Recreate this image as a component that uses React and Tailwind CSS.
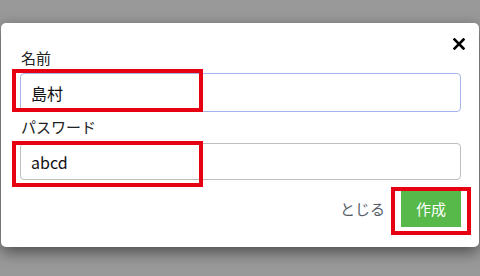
import React from 'react';

const App = () => {
    return (
        <div className="relative h-[276px] w-[480px] overflow-hidden bg-[#999999] pt-[23px] pl-[1px] pr-[1px] font-['Noto_Sans_CJK_JP',sans-serif]">
            {/* Modal */}
            <div className="relative h-[224px] rounded-[5px] bg-white shadow-[0_5px_15px_rgba(0,0,0,0.5)]">
                <button className="absolute right-[14px] top-[15px] flex h-[12px] w-[12px] items-center justify-center">
                    <svg viewBox="0 0 12 12" className="h-[12px] w-[12px]">
                        <path d="M1.5 1.5 L10.5 10.5 M10.5 1.5 L1.5 10.5" stroke="#000" strokeWidth="2.6" strokeLinecap="square" />
                    </svg>
                </button>

                <div className="flex flex-col pl-[19px] pr-[18px] pt-[25px]">
                    <label className="mb-[5px] pl-[1px] text-[15px] leading-[20px] text-[#222]">名前</label>
                    <div className="flex h-[39px] items-center rounded-[4px] border-[1.5px] border-[#a3b5ec] px-[10px] text-[16px] text-[#111]">
                        島村
                    </div>

                    <label className="mb-[6px] mt-[5px] pl-[1px] text-[15px] leading-[20px] text-[#222]">パスワード</label>
                    <div className="flex h-[37px] items-center rounded-[4px] border border-[#bdbdbd] px-[10px] text-[16px] text-[#111]">
                        abcd
                    </div>

                    <div className="mt-[11px] flex items-center justify-end gap-[16px]">
                        <span className="text-[15px] text-[#555d66]">とじる</span>
                        <button className="h-[36px] w-[60px] bg-[#56b949] text-[15px] text-white">作成</button>
                    </div>
                </div>
            </div>

            {/* Annotation boxes */}
            <div className="absolute left-[12px] top-[69px] h-[43px] w-[191px] border-4 border-[#e60012]"></div>
            <div className="absolute left-[12px] top-[141px] h-[46px] w-[191px] border-4 border-[#e60012]"></div>
            <div className="absolute left-[391px] top-[187px] h-[48px] w-[80px] border-4 border-[#e60012]"></div>
        </div>
    );
};

export default App;
